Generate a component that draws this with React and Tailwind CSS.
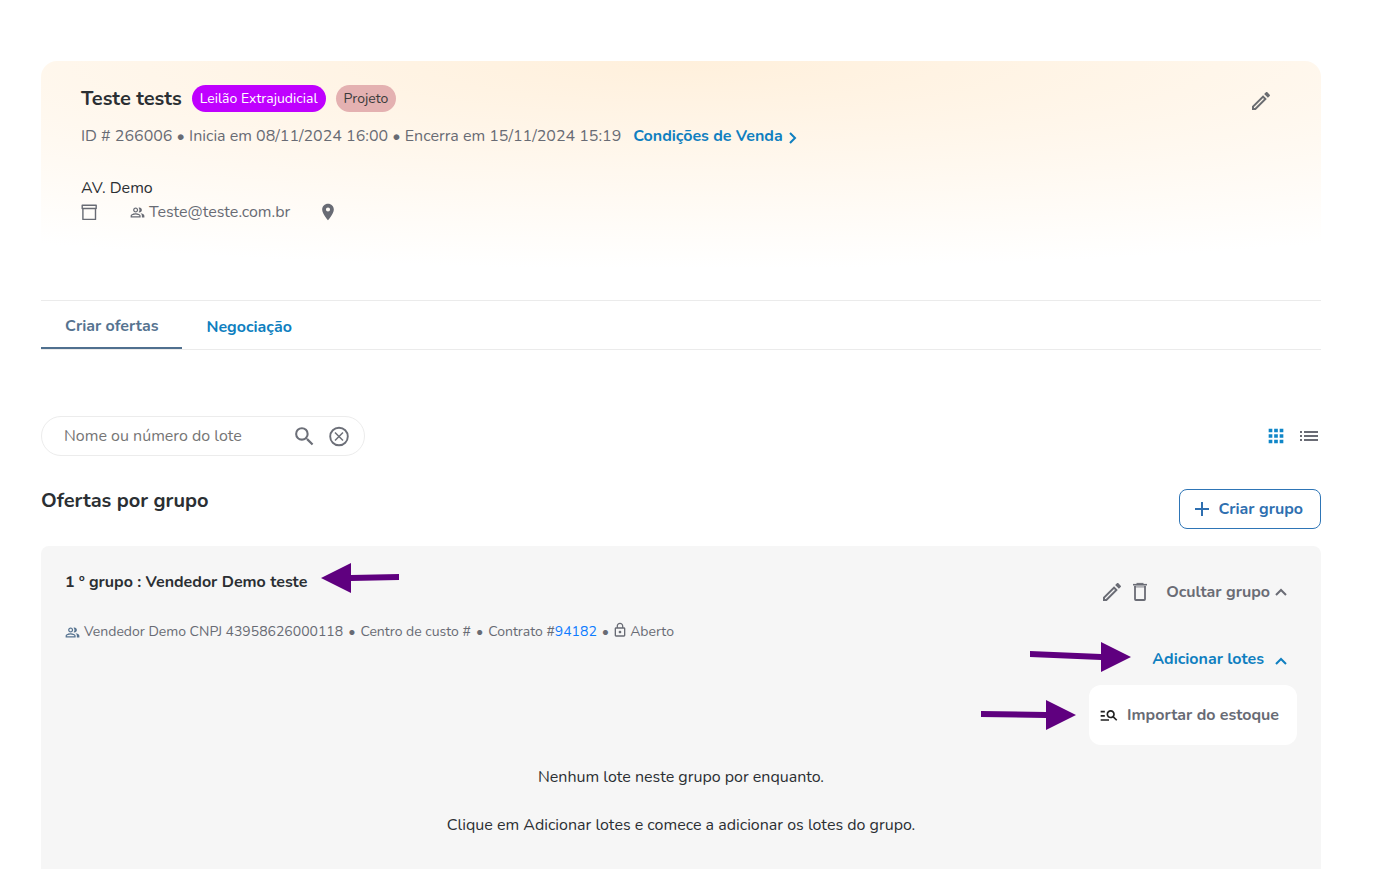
import React from 'react';
import {
  MdOutlineEdit,
  MdManageSearch,
  MdSearch,
  MdLocationOn,
  MdApps,
  MdOutlinePeopleAlt,
  MdLockOutline,
  MdAdd,
} from 'react-icons/md';

function App() {
  return (
    <div className="min-h-screen bg-white pt-[61px] pb-[11px] pl-[41px] pr-[66px] font-['Nunito','Open_Sans',sans-serif] text-base leading-6 text-[#2b2f33]">
      <AuctionHeader />
      <Tabs />

      {/* Search and view mode */}
      <div className="mt-[66px] flex items-center justify-between">
        <form className="flex h-10 w-[324px] items-center rounded-full border border-[#ececec] pl-[22px] pr-[13px] text-[#6c6f78]">
          <input
            type="text"
            aria-label="Nome ou número do lote"
            placeholder="Nome ou número do lote"
            className="min-w-0 flex-1 bg-transparent outline-none placeholder:text-[#757575]"
          />
          <button type="button" aria-label="Buscar" className="mr-2.5">
            <MdSearch size={25} />
          </button>
          <button type="button" aria-label="Limpar">
            <ClearIcon />
          </button>
        </form>
        <div className="flex items-center gap-3">
          <button type="button" aria-label="Grade" className="text-[#0f86c8]">
            <MdApps size={22} />
          </button>
          <button type="button" aria-label="Lista" className="text-[#6a6c75]">
            <ListIcon />
          </button>
        </div>
      </div>

      {/* Groups */}
      <div className="mt-[33px] flex items-start justify-between">
        <h2 className="text-xl leading-6 font-bold">Ofertas por grupo</h2>
        <button
          type="button"
          className="flex h-10 items-center gap-1 rounded-lg border border-[#2e75b6] pl-2.5 pr-[17px] font-bold text-[#2e6fb0]"
        >
          <MdAdd size={24} />
          Criar grupo
        </button>
      </div>
      <GroupCard />
    </div>
  );
}

function AuctionHeader() {
  return (
    <header className="flex min-h-[239px] items-start justify-between rounded-t-2xl bg-[radial-gradient(105%_208px_at_50%_0,#fff0dc,#ffffff)] pt-6 pl-10 pr-12">
      <div>
        <div className="flex items-center gap-2.5">
          <h1 className="text-xl leading-6 font-bold">Teste tests</h1>
          <span className="rounded-full bg-[#bf00ff] px-2 text-sm leading-[27px] text-white">Leilão Extrajudicial</span>
          <span className="rounded-full bg-[#e4b1b1] px-2 text-sm leading-[27px] text-[#3b3b3b]">Projeto</span>
        </div>
        <p className="mt-3 text-[#686b74]">
          ID # 266006 • Inicia em 08/11/2024 16:00 • Encerra em 15/11/2024 15:19
          <a href="#condicoes" className="ml-3 inline-flex items-center gap-1 font-bold text-[#0f7fc0]">
            Condições de Venda
            <Chevron className="mt-1 h-3 w-3 rotate-90" />
          </a>
        </p>
        <p className="mt-7">AV. Demo</p>
        <div className="flex items-center text-[#686b74]">
          <ArchiveIcon />
          <MdOutlinePeopleAlt size={15} className="ml-8 mr-1" />
          <span>Teste@teste.com.br</span>
          <MdLocationOn size={20} className="ml-7" />
        </div>
      </div>
      <button type="button" aria-label="Editar leilão" className="mt-1 text-[#6a6c70]">
        <MdOutlineEdit size={24} />
      </button>
    </header>
  );
}

function Tabs() {
  return (
    <nav className="flex h-[50px] border-y border-[#ebebeb] font-bold">
      <a href="#ofertas" className="border-b-2 border-[#50708f] px-6 pt-[13px] text-[#567390]">Criar ofertas</a>
      <a href="#negociacao" className="px-6 pt-3.5 text-[#0f7fc0]">Negociação</a>
    </nav>
  );
}

function GroupCard() {
  return (
    <section className="relative mt-[17px] min-h-[323px] rounded-t-lg bg-[#f6f6f6] px-6 pt-6">
      <div className="flex justify-between">
        <div>
          <h3 className="font-bold">1 º grupo : Vendedor Demo teste</h3>
          <p className="mt-[26px] flex items-center text-sm leading-6 text-[#686b74]">
            <MdOutlinePeopleAlt size={15} className="mr-1 text-[#567390]" />
            Vendedor Demo CNPJ 43958626000118
            <span className="mx-[5px]">•</span>
            Centro de custo #
            <span className="mx-[5px]">•</span>
            Contrato #
            <a href="#contrato" className="text-[#0d7bff]">94182</a>
            <span className="ml-[5px] mr-[3px]">•</span>
            <MdLockOutline size={16} className="mr-0.5 mb-1" />
            Aberto
          </p>
        </div>
        <div className="flex flex-col items-end pt-2.5 font-bold">
          <div className="flex items-center text-[#6a6c75]">
            <button type="button" aria-label="Editar grupo">
              <MdOutlineEdit size={24} />
            </button>
            <button type="button" aria-label="Excluir grupo" className="ml-2 mr-[18px]">
              <TrashIcon />
            </button>
            <button type="button" className="mr-2.5 flex items-center gap-[5px]">
              Ocultar grupo
              <Chevron className="h-3 w-3" />
            </button>
          </div>
          <button type="button" className="mt-[43px] mr-2.5 flex items-center gap-[11px] text-[#0f7fc0]">
            Adicionar lotes
            <Chevron className="mt-1 h-3 w-3" />
          </button>
          <button
            type="button"
            className="mt-3.5 flex h-[60px] items-center gap-2 rounded-xl bg-white pl-2.5 pr-[18px] text-[#686b74]"
          >
            <MdManageSearch size={20} className="text-[#222222]" />
            Importar do estoque
          </button>
        </div>
      </div>
      <div className="mt-5 text-center">
        <p>Nenhum lote neste grupo por enquanto.</p>
        <p className="mt-6">Clique em Adicionar lotes e comece a adicionar os lotes do grupo.</p>
      </div>

      {/* Pointer arrows laid over the card */}
      <svg className="absolute top-[17px] left-[280px] text-[#5f007f]" width="78" height="30" viewBox="0 0 78 30" fill="currentColor">
        <path d="M0 15 30 0v12l48-1v6l-48 1v12z" />
      </svg>
      <svg className="absolute top-[96px] right-[190px] text-[#5f007f]" width="101" height="30" viewBox="0 0 101 30" fill="currentColor">
        <path d="M0 9l71 3V0l30 15-30 15V18L0 15z" />
      </svg>
      <svg className="absolute top-[154px] right-[245px] text-[#5f007f]" width="95" height="30" viewBox="0 0 95 30" fill="currentColor">
        <path d="M0 11l65 1V0l30 15-30 15V18L0 17z" />
      </svg>
    </section>
  );
}

function Chevron({ className }) {
  return (
    <svg className={className} viewBox="0 0 12 12" fill="none" stroke="currentColor" strokeWidth="2">
      <path d="M1 9l5-5 5 5" />
    </svg>
  );
}

function ClearIcon() {
  return (
    <svg width="24" height="24" viewBox="0 0 24 24" fill="none" stroke="currentColor">
      <circle cx="12" cy="12.5" r="8.8" strokeWidth="1.9" />
      <path d="M8 8.5l8 8M16 8.5l-8 8" strokeWidth="1.5" />
    </svg>
  );
}

function ArchiveIcon() {
  return (
    <svg width="17" height="17" viewBox="0 0 17 17" fill="none" stroke="currentColor" strokeWidth="1.4">
      <path d="M1.2 1.2h14v3.3h-14zM1.9 4.5v10.9h12.6V4.5" strokeLinejoin="round" />
    </svg>
  );
}

function TrashIcon() {
  return (
    <svg width="16" height="20" viewBox="0 0 16 20" fill="none" stroke="currentColor">
      <path d="M4.5 1.4h7" strokeWidth="1" />
      <path d="M1 2.7h14" strokeWidth="1.6" />
      <path d="M2.5 4.7h11" strokeWidth="2" opacity="0.5" />
      <path d="M3 4v13.2q0 .8.8.8h8.4q.8 0 .8-.8V4" strokeWidth="1.8" />
    </svg>
  );
}

function ListIcon() {
  return (
    <svg width="22" height="22" viewBox="0 0 22 22" fill="currentColor">
      <path d="M1 6h2v2H1zM5 6h14v2H5zM1 10h2v2H1zM5 10h14v2H5zM1 14h2v2H1zM5 14h14v2H5z" />
    </svg>
  );
}

export default App;
